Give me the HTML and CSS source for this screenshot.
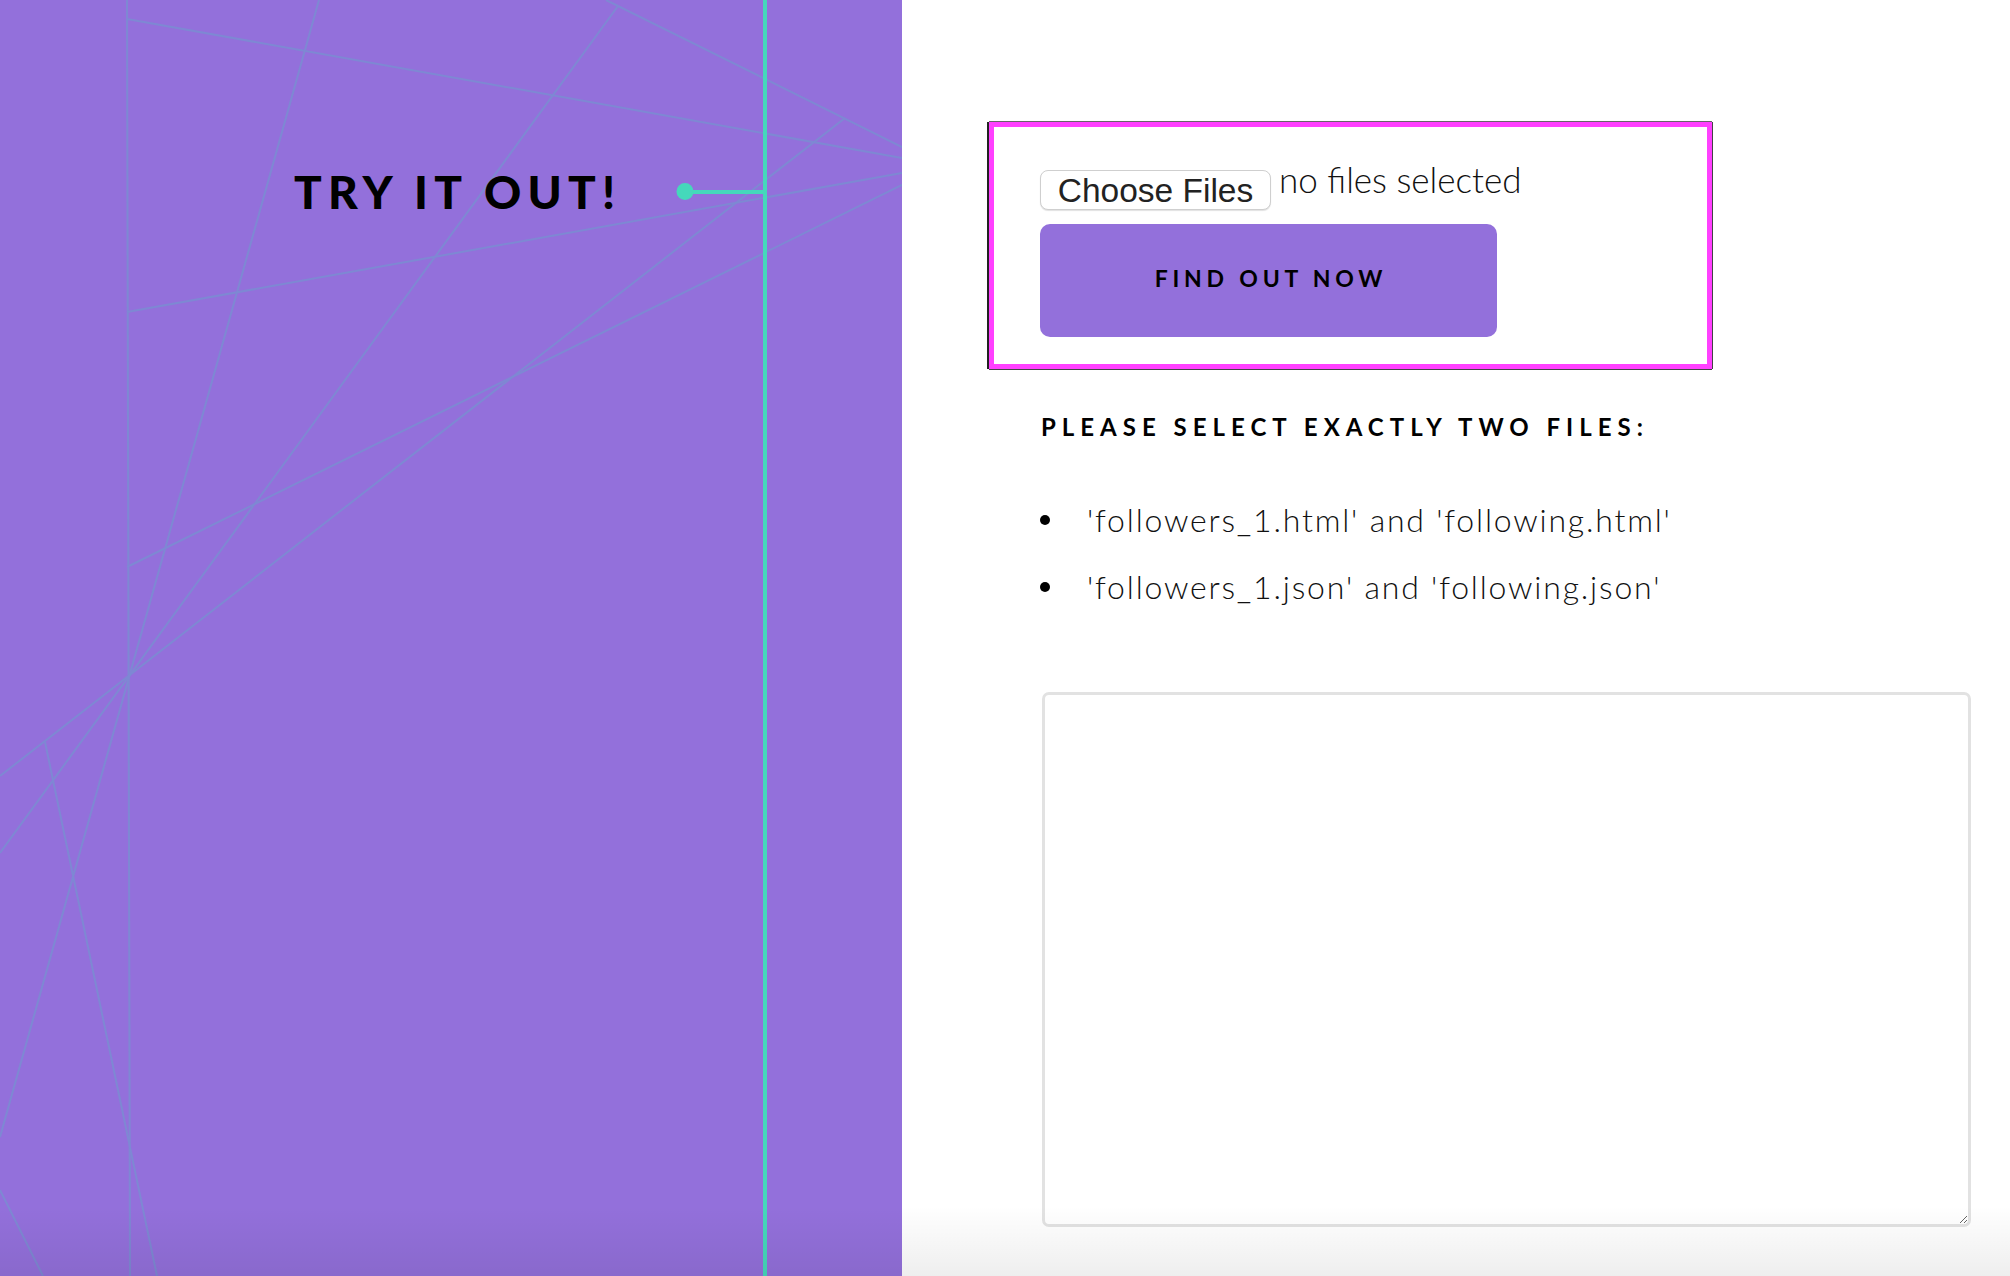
FILE: index.html
```html
<!DOCTYPE html>
<html lang="en">
<head>
<meta charset="utf-8">
<title>Try it out</title>
<link rel="stylesheet" href="styles.css">
</head>
<body>
<div class="page">
  <section class="hero">
    <svg class="hero-art" width="902" height="1276" viewBox="0 0 902 1276" xmlns="http://www.w3.org/2000/svg">
      <g class="web">
        <line x1="127" y1="0" x2="130" y2="1276"/>
        <line x1="127" y1="19" x2="902" y2="158"/>
        <line x1="319" y1="0" x2="0" y2="1137"/>
        <line x1="845" y1="118" x2="0" y2="776"/>
        <line x1="618" y1="6" x2="0" y2="853"/>
        <line x1="606" y1="0" x2="902" y2="147"/>
        <line x1="127" y1="312" x2="902" y2="173"/>
        <line x1="127" y1="567" x2="902" y2="185"/>
        <line x1="45" y1="742" x2="157" y2="1276"/>
        <line x1="0" y1="1190" x2="43" y2="1276"/>
      </g>
      <g class="rail">
        <rect x="763" y="0" width="4" height="1276"/>
        <rect x="685" y="190" width="80" height="4"/>
        <circle cx="685" cy="191.5" r="8.5"/>
      </g>
    </svg>
    <h1 class="hero-title">TRY IT OUT!</h1>
  </section>
  <main class="main">
    <form class="upload-box">
      <div class="file-row">
        <span class="file-btn">Choose Files</span>
        <span class="file-status">no files selected</span>
      </div>
      <button type="button" class="find-btn">FIND OUT NOW</button>
    </form>
    <div class="info">
      <h2 class="info-title">PLEASE SELECT EXACTLY TWO FILES:</h2>
      <ul class="file-list">
        <li>'followers_1.html' and 'following.html'</li>
        <li>'followers_1.json' and 'following.json'</li>
      </ul>
      <textarea class="result"></textarea>
    </div>
  </main>
</div>
<div class="fade"></div>
</body>
</html>
```

FILE: styles.css
```css
html, body {
  margin: 0;
  padding: 0;
}
body {
  width: 2010px;
  height: 1276px;
  overflow: hidden;
  position: relative;
  background: #ffffff;
  font-family: "Lato", "Open Sans", sans-serif;
  color: #111;
}
.page {
  display: flex;
  height: 1276px;
}
.hero {
  width: 902px;
  flex: 0 0 902px;
  background: #9370db;
  position: relative;
  overflow: hidden;
}
.hero-art {
  position: absolute;
  left: 0;
  top: 0;
}
.web line {
  stroke: #7e88d3;
  stroke-width: 2;
}
.rail {
  fill: #45d8bb;
}
.hero-title {
  position: relative;
  margin: 0;
  padding: 169px 0 0 294px;
  font-family: "Lato", sans-serif;
  font-weight: 900;
  font-size: 46px;
  line-height: 46px;
  letter-spacing: 6.2px;
  color: #000;
}
.main {
  flex: 1;
  padding: 121px 0 0 87px;
}
.upload-box {
  box-sizing: border-box;
  width: 723px;
  height: 247px;
  border: 5px solid #ff40ff;
  box-shadow: -2px 0 0 #222, 0 -1px 0 #666, 1px 0 0 #444, 0 1px 0 #444;
  padding: 32px 0 0 46px;
  margin-top: 1px;
}
.file-row {
  display: flex;
  align-items: flex-start;
  gap: 8px;
}
.file-btn {
  margin-top: 11px;
  display: inline-flex;
  align-items: center;
  justify-content: center;
  box-sizing: border-box;
  width: 231px;
  height: 40px;
  border: 1px solid #cfcfcf;
  border-radius: 8px;
  background: #fff;
  box-shadow: 0 1px 1px rgba(0,0,0,0.12);
  font-family: "Liberation Sans", Arial, sans-serif;
  font-size: 33.5px;
  color: #222;
  line-height: 1;
  padding-top: 2px;
}
.file-status {
  font-family: "Lato", sans-serif;
  font-weight: 300;
  font-size: 35px;
  line-height: 40px;
  color: #111;
}
.find-btn {
  display: block;
  margin-top: 14px;
  width: 457px;
  height: 113px;
  border: none;
  border-radius: 10px;
  background: #9370db;
  font-family: "Lato", sans-serif;
  font-weight: 700;
  font-size: 23px;
  letter-spacing: 4.8px;
  color: #000;
  padding: 0 0 5px 5px;
}
.info {
  padding-left: 52px;
}
.info-title {
  margin: 43px 0 0 0;
  font-family: "Lato", sans-serif;
  font-weight: 700;
  font-size: 24px;
  line-height: 30px;
  letter-spacing: 6px;
  color: #000;
}
.file-list {
  list-style: none;
  margin: 44px 0 0 0;
  padding: 0;
}
.file-list li {
  display: flex;
  align-items: center;
  font-family: "Lato", sans-serif;
  font-weight: 300;
  font-size: 32px;
  letter-spacing: 1.8px;
  line-height: 67px;
  color: #111;
}
.file-list li::before {
  content: "";
  width: 10px;
  height: 10px;
  border-radius: 50%;
  background: #000;
  margin: 0 37px 0 -1px;
  flex: 0 0 10px;
}
.result {
  display: block;
  margin: 72px 0 0 1px;
  box-sizing: border-box;
  width: 929px;
  height: 535px;
  border: 3px solid #e2e2e2;
  border-radius: 7px;
  background: #fff;
  resize: vertical;
  outline: none;
}
.fade {
  position: absolute;
  left: 0;
  right: 0;
  bottom: 0;
  height: 70px;
  background: linear-gradient(to bottom, rgba(0,0,0,0), rgba(0,0,0,0.065));
  pointer-events: none;
}
```
